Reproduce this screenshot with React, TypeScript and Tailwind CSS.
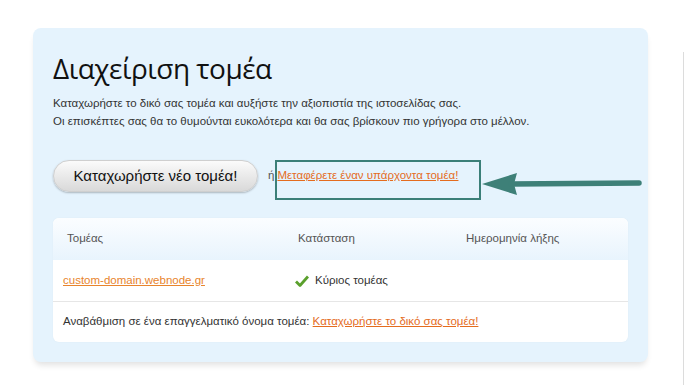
import React from "react";

const sans = { fontFamily: '"Liberation Sans", Arial, sans-serif' };

export default function App() {
  return (
    <div className="relative w-[686px] h-[385px] bg-white overflow-hidden" style={{ fontFamily: '"Liberation Sans", Arial, sans-serif' }}>
      <div className="absolute left-[683px] top-[52px] bottom-0 w-px bg-[#dcdcdc]" />
      <div className="pt-[28px] pl-[33px]">
        <div className="w-[615px] h-[334px] rounded-[8px] bg-[#e5f3fd] shadow-[0_5px_6px_-2px_rgba(0,0,0,0.12)] px-[20px] pt-[23px]">
          <h1 className="text-[28px] leading-[34px] text-[#111] tracking-[-0.5px]" style={{ fontFamily: '"Open Sans", "Liberation Sans", sans-serif', fontWeight: 400 }}>
            Διαχείριση τομέα
          </h1>
          <div className="mt-[9px] text-[11.5px] leading-[18px] text-[#333]" style={sans}>
            <p>Καταχωρήστε το δικό σας τομέα και αυξήστε την αξιοπιστία της ιστοσελίδας σας.</p>
            <p>Οι επισκέπτες σας θα το θυμούνται ευκολότερα και θα σας βρίσκουν πιο γρήγορα στο μέλλον.</p>
          </div>
          <div className="relative mt-[30px] flex items-center h-[32px]">
            <button className="w-[205px] h-[32px] rounded-full bg-gradient-to-b from-[#fbfbfb] to-[#d9d9d9] border border-[#cfcfcf] shadow-[0_1px_2px_rgba(0,0,0,0.25)] text-[15px] text-[#111]">
              Καταχωρήστε νέο τομέα!
            </button>
            <span className="ml-[10px] text-[11.5px] text-[#555]" style={sans}>ή</span>
            <a className="ml-[3px] text-[11.5px] text-[#e46c1e] underline" style={sans}>Μεταφέρετε έναν υπάρχοντα τομέα!</a>
            <div className="absolute left-[222px] top-[0px] w-[206px] h-[40px] border-[2px] border-[#3b7f78]" />
            <svg className="absolute left-[428px] top-[10px]" width="164" height="26" viewBox="0 0 164 26">
              <polygon points="1,14 36,3 33,14 36,25" fill="#3e8078" />
              <line x1="30" y1="14" x2="158" y2="13" stroke="#3e8078" strokeWidth="5.5" strokeLinecap="round" />
            </svg>
          </div>
          <div className="mt-[26px] rounded-[6px] bg-white overflow-hidden shadow-[0_0_2px_rgba(0,0,0,0.04)] text-[11.5px]" style={sans}>
            <div className="flex items-center h-[42px] bg-gradient-to-b from-[#fbfdff] to-[#e8f4fd] text-[#555]">
              <span className="pl-[14px] w-[245px]">Τομέας</span>
              <span className="w-[168px]">Κατάσταση</span>
              <span>Ημερομηνία λήξης</span>
            </div>
            <div className="flex items-center h-[42px] border-b border-[#e6e6e6]">
              <a className="ml-[10px] w-[232px] text-[#e8842c] underline">custom-domain.webnode.gr</a>
              <svg width="14" height="12" viewBox="0 0 14 12" className="mr-[6px]">
                <path d="M1 6.5 L5 10.5 L13 1.5" fill="none" stroke="#5aa02c" strokeWidth="2.8" strokeLinejoin="round" />
              </svg>
              <span className="text-[#333]">Κύριος τομέας</span>
            </div>
            <div className="flex items-center h-[40px] pl-[10px] text-[#333]">
              <span>Αναβάθμιση σε ένα επαγγελματικό όνομα τομέα:&nbsp;</span>
              <a className="text-[#e46c1e] underline">Καταχωρήστε το δικό σας τομέα!</a>
            </div>
          </div>
        </div>
      </div>
    </div>
  );
}
